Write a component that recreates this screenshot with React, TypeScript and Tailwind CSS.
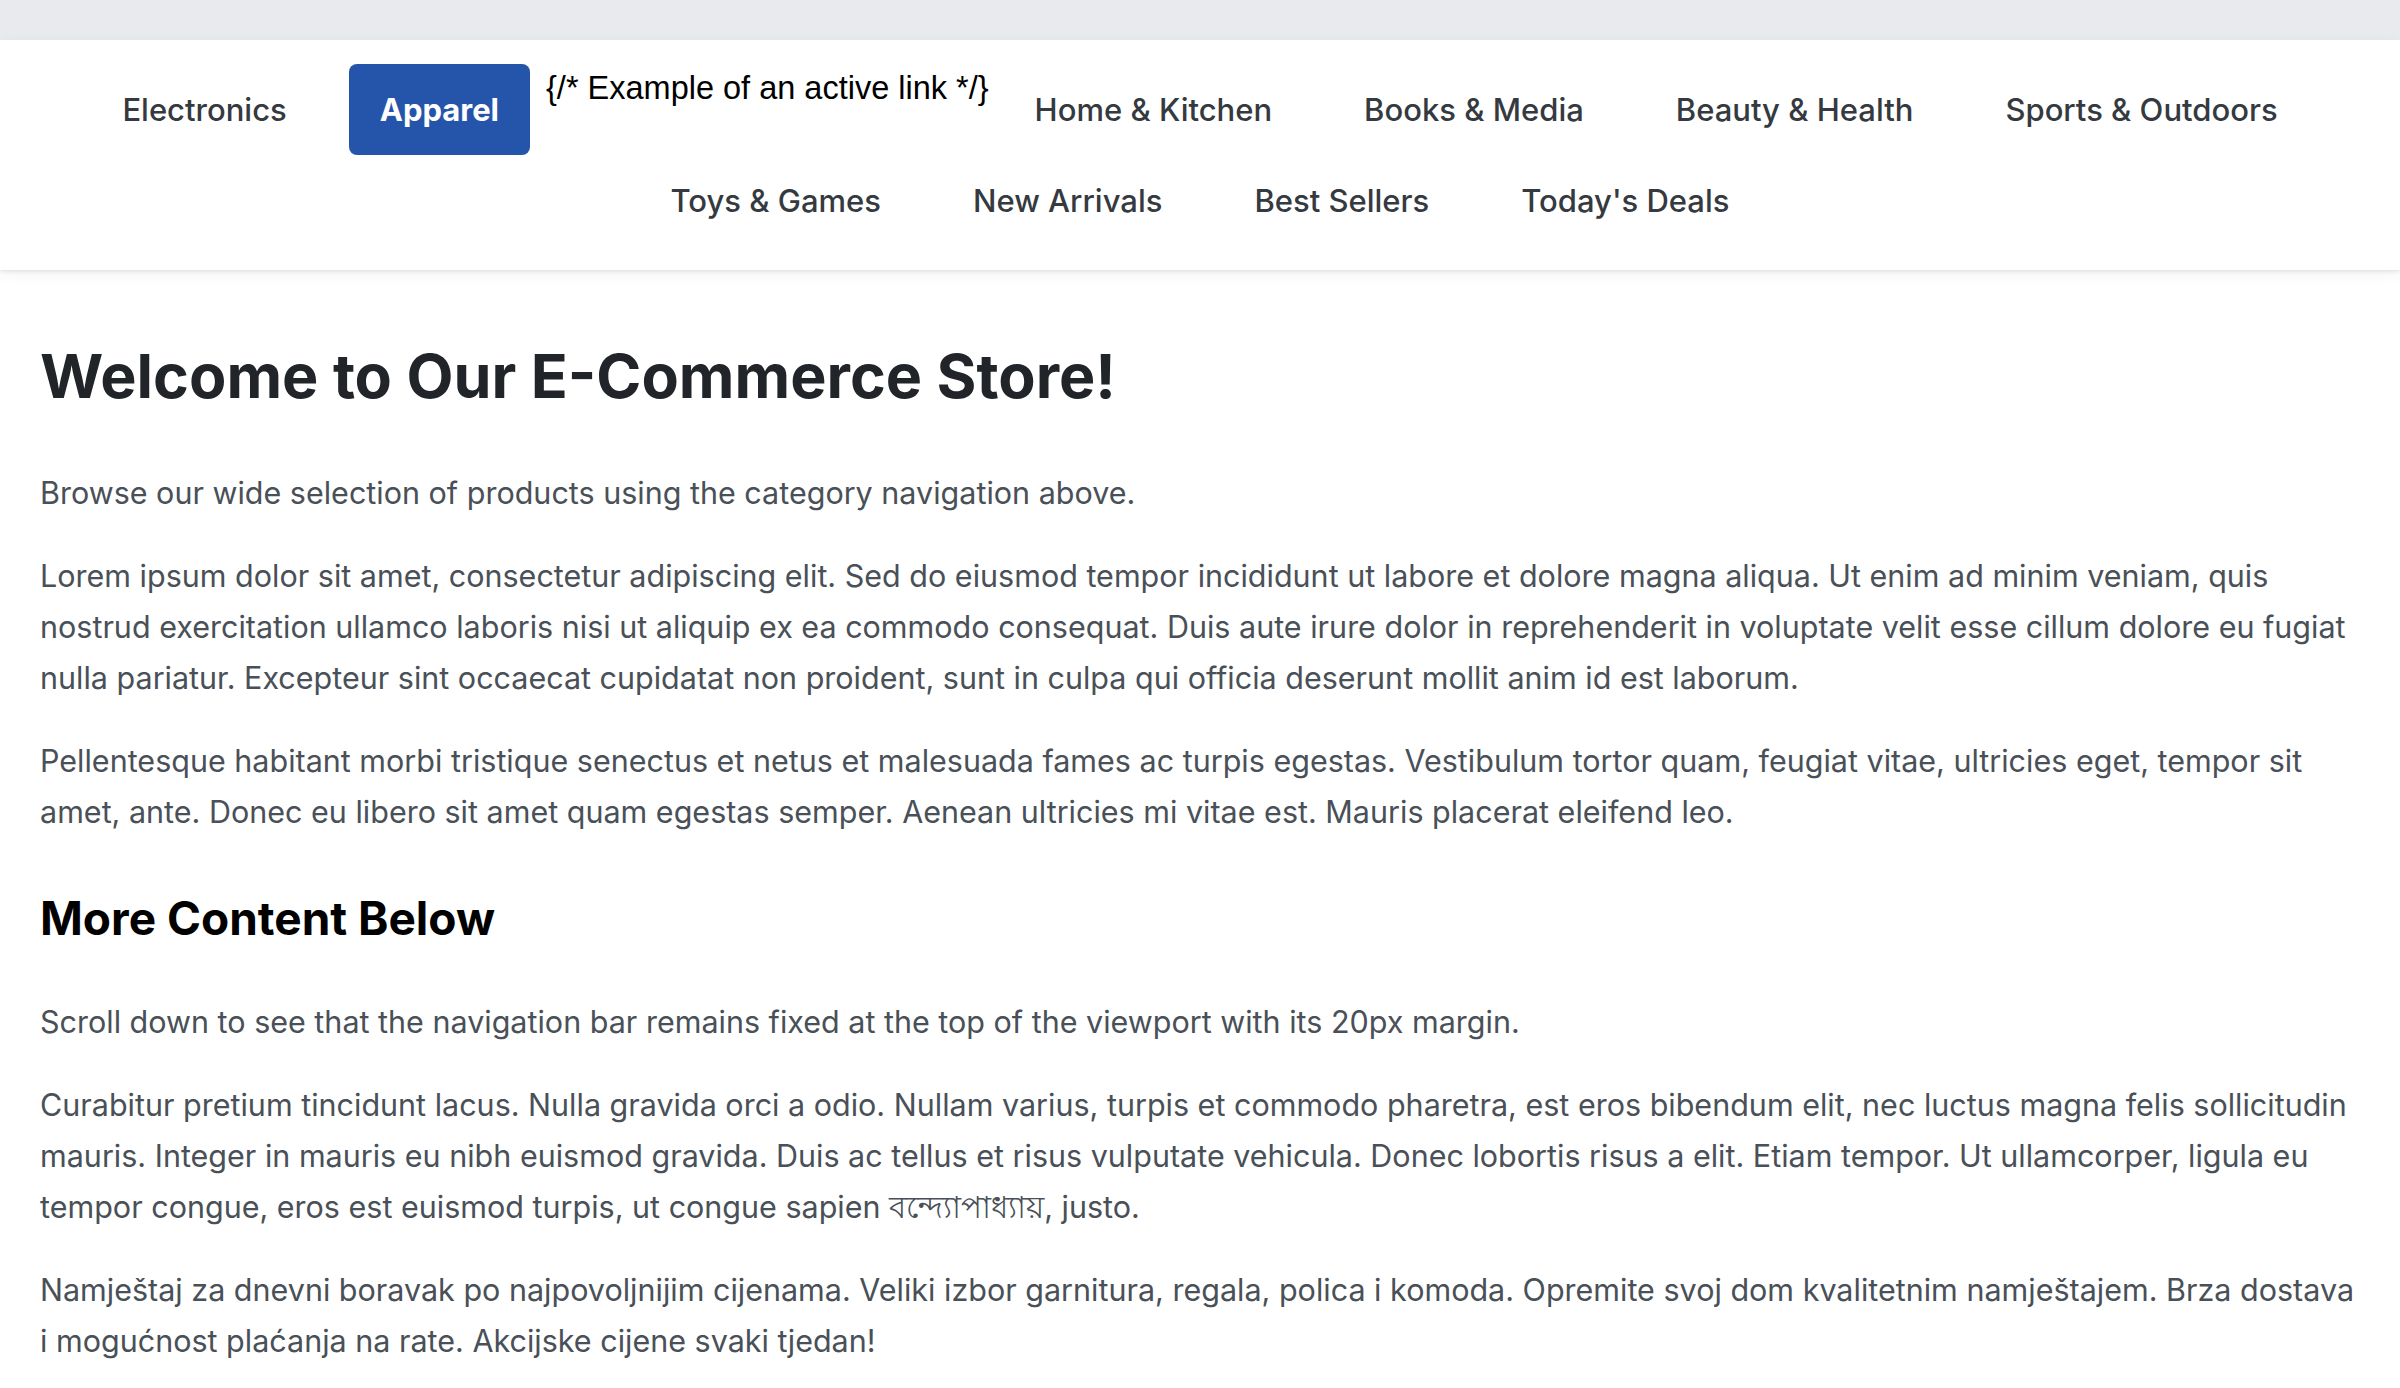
const categories = [
	"Electronics",
	"Apparel",
	"Home & Kitchen",
	"Books & Media",
	"Beauty & Health",
	"Sports & Outdoors",
	"Toys & Games",
	"New Arrivals",
	"Best Sellers",
	"Today's Deals",
]

function NavLink({ label, active }: { label: string; active?: boolean }) {
	return (
		<li className="mx-[16px]">
			<a
				href="#"
				className={
					active
						? "block rounded-[8px] bg-[#2555ab] px-[31px] py-[27px] text-[31px] leading-[37px] font-bold text-white"
						: "block rounded-[8px] px-[30px] py-[27px] text-[31px] leading-[37px] font-medium text-[#343a40]"
				}
			>
				{label}
			</a>
		</li>
	)
}

export default function App() {
	return (
		<div className="min-h-screen bg-white font-['Inter',sans-serif]">
			<div className="h-[40px] bg-[#e9eaee]" />
			<nav className="relative z-10 bg-white py-[24px] shadow-[0_2px_3px_rgba(0,0,0,0.08),0_4px_14px_rgba(0,0,0,0.05)]">
				<ul className="flex flex-wrap items-start justify-center">
					<NavLink label={categories[0]} />
					<NavLink label={categories[1]} active />
					<span className="mt-[6px] font-['Liberation_Sans',Arial,sans-serif] text-[32.5px] leading-[37px] text-black">
						{"{/* Example of an active link */}"}
					</span>
					{categories.slice(2).map((c) => (
						<NavLink key={c} label={c} />
					))}
				</ul>
			</nav>
			<main className="px-[40px] pt-[71px] pb-[40px] text-[30.5px] leading-[51px] text-[#495057]">
				<h1 className="mb-[56px] text-[61px] leading-[70px] font-bold text-[#212529]">
					Welcome to Our E-Commerce Store!
				</h1>
				<p className="mb-[32px]">Browse our wide selection of products using the category navigation above.</p>
				<p className="mb-[32px]">
					Lorem ipsum dolor sit amet, consectetur adipiscing elit. Sed do eiusmod tempor incididunt ut labore et
					dolore magna aliqua. Ut enim ad minim veniam, quis nostrud exercitation ullamco laboris nisi ut aliquip ex
					ea commodo consequat. Duis aute irure dolor in reprehenderit in voluptate velit esse cillum dolore eu fugiat
					nulla pariatur. Excepteur sint occaecat cupidatat non proident, sunt in culpa qui officia deserunt mollit
					anim id est laborum.
				</p>
				<p className="mb-[32px]">
					Pellentesque habitant morbi tristique senectus et netus et malesuada fames ac turpis egestas. Vestibulum
					tortor quam, feugiat vitae, ultricies eget, tempor sit amet, ante. Donec eu libero sit amet quam egestas
					semper. Aenean ultricies mi vitae est. Mauris placerat eleifend leo.
				</p>
				<h2 className="mt-[55px] mb-[51px] text-[46px] leading-[53px] font-bold text-black">More Content Below</h2>
				<p className="mb-[32px]">
					Scroll down to see that the navigation bar remains fixed at the top of the viewport with its 20px margin.
				</p>
				<p className="mb-[32px]">
					Curabitur pretium tincidunt lacus. Nulla gravida orci a odio. Nullam varius, turpis et commodo pharetra,
					est eros bibendum elit, nec luctus magna felis sollicitudin mauris. Integer in mauris eu nibh euismod
					gravida. Duis ac tellus et risus vulputate vehicula. Donec lobortis risus a elit. Etiam tempor. Ut
					ullamcorper, ligula eu tempor congue, eros est euismod turpis, ut congue sapien বন্দ্যোপাধ্যায়, justo.
				</p>
				<p className="mb-[32px]">
					Namještaj za dnevni boravak po najpovoljnijim cijenama. Veliki izbor garnitura, regala, polica i komoda.
					Opremite svoj dom kvalitetnim namještajem. Brza dostava i mogućnost plaćanja na rate. Akcijske cijene
					svaki tjedan!
				</p>
			</main>
		</div>
	)
}
